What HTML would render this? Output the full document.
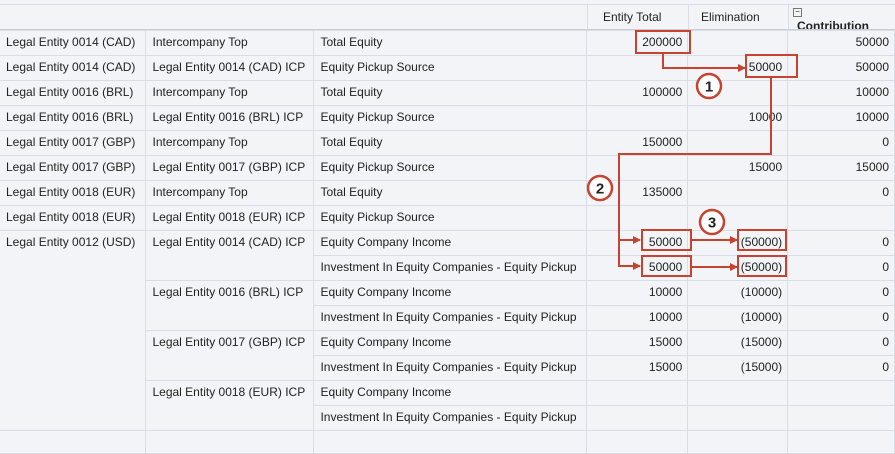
<!DOCTYPE html>
<html><head><meta charset="utf-8"><style>
body{margin:0;width:895px;height:439px;overflow:hidden;background:#f2f4f7;font-family:"Liberation Sans",Arial,sans-serif;font-size:12px;color:#222;position:relative}
table{position:absolute;left:0;top:30px;border-collapse:collapse;table-layout:fixed}
td{height:22px;padding:0 6px 2px 6px;border:1px solid #d9dee4;white-space:nowrap;overflow:hidden;vertical-align:middle;line-height:14px}
tr td:first-child{border-left:none}
td.n{text-align:right;padding-right:5px}
td.t{vertical-align:top;padding-top:4px}
.hd{position:absolute;top:4px;height:26px;border-left:1px solid #d9dee4;border-top:1px solid #d9dee4;border-bottom:1px solid #c9ced5;box-sizing:border-box}
</style></head><body>
<div class="hd" style="left:0;width:587px;border-left:none"></div>
<div class="hd" style="left:587px;width:101px"><span style="position:absolute;left:15px;top:5px">Entity Total</span></div>
<div class="hd" style="left:688px;width:100px"><span style="position:absolute;left:12px;top:5px">Elimination</span></div>
<div class="hd" style="left:788px;width:107px;overflow:hidden"><span style="position:absolute;left:4px;top:3px;width:7px;height:7px;border:1px solid #777;font-size:8px;line-height:6px;text-align:center">−</span><b style="position:absolute;left:8px;top:14px">Contribution</b></div>
<table>
<colgroup><col style="width:146px"><col style="width:168px"><col style="width:273px"><col style="width:101px"><col style="width:100px"><col style="width:107px"></colgroup>
<tr><td>Legal Entity 0014 (CAD)</td><td>Intercompany Top</td><td>Total Equity</td><td class="n">200000</td><td class="n"></td><td class="n">50000</td></tr>
<tr><td>Legal Entity 0014 (CAD)</td><td>Legal Entity 0014 (CAD) ICP</td><td>Equity Pickup Source</td><td class="n"></td><td class="n">50000</td><td class="n">50000</td></tr>
<tr><td>Legal Entity 0016 (BRL)</td><td>Intercompany Top</td><td>Total Equity</td><td class="n">100000</td><td class="n"></td><td class="n">10000</td></tr>
<tr><td>Legal Entity 0016 (BRL)</td><td>Legal Entity 0016 (BRL) ICP</td><td>Equity Pickup Source</td><td class="n"></td><td class="n">10000</td><td class="n">10000</td></tr>
<tr><td>Legal Entity 0017 (GBP)</td><td>Intercompany Top</td><td>Total Equity</td><td class="n">150000</td><td class="n"></td><td class="n">0</td></tr>
<tr><td>Legal Entity 0017 (GBP)</td><td>Legal Entity 0017 (GBP) ICP</td><td>Equity Pickup Source</td><td class="n"></td><td class="n">15000</td><td class="n">15000</td></tr>
<tr><td>Legal Entity 0018 (EUR)</td><td>Intercompany Top</td><td>Total Equity</td><td class="n">135000</td><td class="n"></td><td class="n">0</td></tr>
<tr><td>Legal Entity 0018 (EUR)</td><td>Legal Entity 0018 (EUR) ICP</td><td>Equity Pickup Source</td><td class="n"></td><td class="n"></td><td class="n"></td></tr>
<tr><td class="t" rowspan="8">Legal Entity 0012 (USD)</td><td class="t" rowspan="2">Legal Entity 0014 (CAD) ICP</td><td>Equity Company Income</td><td class="n">50000</td><td class="n">(50000)</td><td class="n">0</td></tr>
<tr><td>Investment In Equity Companies - Equity Pickup</td><td class="n">50000</td><td class="n">(50000)</td><td class="n">0</td></tr>
<tr><td class="t" rowspan="2">Legal Entity 0016 (BRL) ICP</td><td>Equity Company Income</td><td class="n">10000</td><td class="n">(10000)</td><td class="n">0</td></tr>
<tr><td>Investment In Equity Companies - Equity Pickup</td><td class="n">10000</td><td class="n">(10000)</td><td class="n">0</td></tr>
<tr><td class="t" rowspan="2">Legal Entity 0017 (GBP) ICP</td><td>Equity Company Income</td><td class="n">15000</td><td class="n">(15000)</td><td class="n">0</td></tr>
<tr><td>Investment In Equity Companies - Equity Pickup</td><td class="n">15000</td><td class="n">(15000)</td><td class="n">0</td></tr>
<tr><td class="t" rowspan="2">Legal Entity 0018 (EUR) ICP</td><td>Equity Company Income</td><td class="n"></td><td class="n"></td><td class="n"></td></tr>
<tr><td>Investment In Equity Companies - Equity Pickup</td><td class="n"></td><td class="n"></td><td class="n"></td></tr>
<tr><td style="height:3px;padding:0"></td><td style="padding:0"></td><td style="padding:0"></td><td style="padding:0"></td><td style="padding:0"></td><td style="padding:0"></td></tr>
</table>
<svg width="895" height="439" style="position:absolute;left:0;top:0" fill="none" stroke="#c5432f" stroke-width="2">
<defs><marker id="a" markerWidth="8" markerHeight="8" refX="7" refY="4" orient="auto" markerUnits="userSpaceOnUse"><path d="M0,0 L8,4 L0,8 Z" fill="#c5432f" stroke="none"/></marker></defs>
<rect x="636" y="31" width="54" height="22"/>
<rect x="746" y="55" width="51" height="22"/>
<path d="M663,53 V68 H745" marker-end="url(#a)"/>
<path d="M771,77 V154 H619 V240 H640" marker-end="url(#a)"/>
<path d="M619,240 V266 H640" marker-end="url(#a)"/>
<rect x="642" y="230" width="49" height="20"/>
<rect x="642" y="256" width="49" height="20"/>
<rect x="738" y="230" width="48" height="20"/>
<rect x="738" y="256" width="48" height="20"/>
<path d="M691,240 H737" marker-end="url(#a)"/>
<path d="M691,267 H737" marker-end="url(#a)"/>
<g stroke-width="2.5" fill="#fff"><circle cx="709" cy="86" r="12"/><circle cx="600" cy="188" r="12"/><circle cx="712" cy="222" r="12"/></g>
<g fill="#222" stroke="none" font-family="Liberation Sans,Arial,sans-serif" font-weight="bold" font-size="15" text-anchor="middle"><text x="709" y="91.5">1</text><text x="600" y="193.5">2</text><text x="712" y="227.5">3</text></g>
</svg>
</body></html>
